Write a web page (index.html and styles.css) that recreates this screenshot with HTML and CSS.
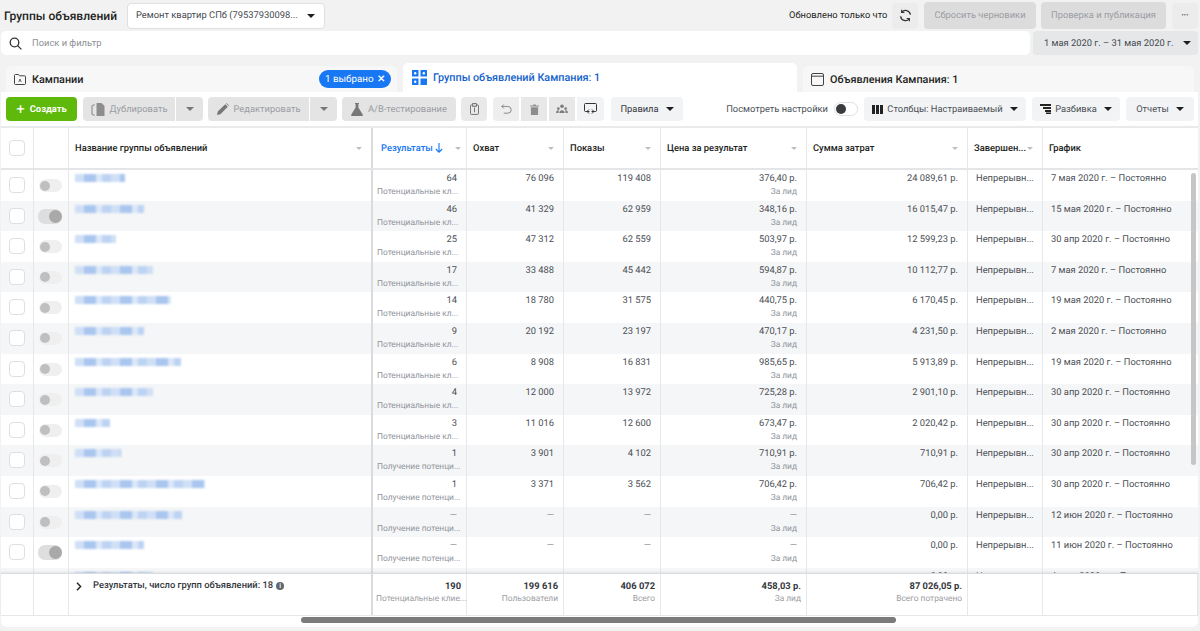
FILE: index.html
```html
<!DOCTYPE html>
<html lang="ru">
<head>
<meta charset="utf-8">
<title>Группы объявлений</title>
<link rel="stylesheet" href="styles.css">
</head>
<body>
<header class="top">
  <h1 class="title">Группы объявлений</h1>
  <div class="account"><span>Ремонт квартир СПб (79537930098...</span><i class="tri dark"></i></div>
  <div class="top-right">
    <span class="updated">Обновлено только что</span>
    <button class="btn square"><svg width="13" height="13" viewBox="0 0 14 14" fill="none" stroke="#333" stroke-width="1.4"><path d="M12.300 6A5.400 5.400 0 0 0 2.800 3.400M1.700 8a5.400 5.400 0 0 0 9.500 2.600"/><path d="M2.800.8v3h3M11.200 13.200v-3h-3" stroke-width="1.200"/></svg></button>
    <button class="btn dis wide1">Сбросить черновики</button>
    <button class="btn dis wide2">Проверка и публикация</button>
    <button class="btn square dots">•••</button>
  </div>
</header>

<div class="search-row">
  <div class="search">
    <svg width="13" height="13" viewBox="0 0 13 13" fill="none" stroke="#333" stroke-width="1.3"><circle cx="5.5" cy="5.5" r="4.3"/><path d="M8.6 8.6L12.4 12.4"/></svg>
    <span>Поиск и фильтр</span>
  </div>
  <button class="btn date"><span>1 мая 2020 г. – 31 мая 2020 г.</span><i class="tri dark"></i></button>
</div>

<nav class="tabs">
  <div class="tab">
    <svg width="12" height="12" viewBox="0 0 12 12" fill="none" stroke="#444"><path d="M.5 2.5a1 1 0 0 1 1-1h3l1 1.3h5a1 1 0 0 1 1 1v6.7a1 1 0 0 1-1 1h-9a1 1 0 0 1-1-1z"/><path d="M4.8 9l1.2-3 1.2 3" stroke-width=".8"/></svg>
    <b>Кампании</b>
    <span class="pill">1 выбрано <em>×</em></span>
  </div>
  <div class="tab active">
    <svg width="15" height="15" viewBox="0 0 15 15" fill="#1877f2"><path d="M0 0h6.5v6.5H0zM8.5 0H15v6.5H8.5zM0 8.5h6.5V15H0zM8.5 8.5H15V15H8.5z"/><circle cx="3.2" cy="3.2" r="1.2" fill="#fff"/><circle cx="11.8" cy="3.2" r="1.2" fill="#fff"/><circle cx="3.2" cy="11.8" r="1.2" fill="#fff"/></svg>
    <b>Группы объявлений Кампания: 1</b>
  </div>
  <div class="tab">
    <svg width="13" height="13" viewBox="0 0 13 13" fill="none" stroke="#444"><rect x=".5" y=".5" width="12" height="12" rx="1.5"/><path d="M.5 3.2h12"/></svg>
    <b>Объявления Кампания: 1</b>
  </div>
</nav>

<main class="panel">
  <div class="toolbar">
    <button class="btn create"><span class="plus">+</span>Создать</button>
    <button class="btn dis b-dup"><svg width="14" height="13" viewBox="0 0 14 13" fill="#8d8d8d"><path d="M5.5 0h5l3 3v10h-8z"/><path d="M3.5 1.5L1 3v8l2.5 1.5" fill="none" stroke="#8d8d8d" stroke-width="1.1"/></svg>Дублировать</button>
    <button class="btn dis b-dd"><i class="tri grey"></i></button>
    <button class="btn dis b-edit"><svg width="12" height="12" viewBox="0 0 12 12" fill="#777"><path d="M0 12l.8-3.4L8.2 1.2l2.6 2.6-7.4 7.4zM9 .4l.5-.4L12 2.5l-.4.5z"/></svg>Редактировать</button>
    <button class="btn dis b-dd2"><i class="tri grey"></i></button>
    <button class="btn dis b-ab"><svg width="12" height="13" viewBox="0 0 12 13" fill="#777"><path d="M4 0h4v1H7.400v3.600L12 12a1 1 0 0 1-.8 1H.8A1 1 0 0 1 0 12l4.600-7.400V1H4z"/></svg>A/B-тестирование</button>
    <button class="btn dis ico b-clip"><svg width="9" height="12" viewBox="0 0 10 13" fill="none" stroke="#666"><rect x=".5" y="2" width="9" height="10.500" rx="1"/><rect x="3" y=".5" width="4" height="3" fill="#e4e4e4"/><path d="M5 5v5"/></svg></button>
    <button class="btn dis ico b-undo"><svg width="11" height="10" viewBox="0 0 12 11" fill="none" stroke="#8a8a8a" stroke-width="1.100"><path d="M3 .5L.8 2.700 3 4.900M1 2.700h6.500a3.700 3.700 0 0 1 0 7.400H3"/></svg></button>
    <button class="btn dis ico b-mid"><svg width="9" height="11" viewBox="0 0 10 12" fill="#8d8d8d"><path d="M0 1.500h3.500V.5h3v1H10v1.200H0zM1 3.500h8V12H1z"/></svg></button>
    <button class="btn dis ico b-mid"><svg width="12" height="10" viewBox="0 0 13 11" fill="#7d7d7d"><circle cx="6.500" cy="2.500" r="2"/><circle cx="2.500" cy="5" r="1.500"/><circle cx="10.500" cy="5" r="1.500"/><path d="M3.500 10c0-4 6-4 6 0zM0 10c0-3 2-3.300 3-2.800L2.500 10zM13 10c0-3-2-3.300-3-2.800l.5 2.800z"/></svg></button>
    <button class="btn light ico b-share"><svg width="13" height="12" viewBox="0 0 13 12" fill="none" stroke="#333"><path d="M3 8.500H1.500a1 1 0 0 1-1-1v-6a1 1 0 0 1 1-1h10a1 1 0 0 1 1 1v6a1 1 0 0 1-1 1H10" fill="#f2f3f4"/><path d="M5 6.500l-2 2 2 2M8 6.500l2 2-2 2M3 8.500h2.500M7.500 8.500H10" stroke-width="1"/></svg></button>
    <button class="btn light b-rules">Правила<i class="tri dark"></i></button>
    <div class="tool-right">
      <span class="view">Посмотреть настройки</span>
      <span class="switch"><i></i></span>
      <button class="btn light b-cols"><svg width="11" height="9" viewBox="0 0 11 9" fill="#222"><path d="M0 0h3v9H0zM4 0h3v9H4zM8 0h3v9H8z"/></svg>Столбцы: Настраиваемый<i class="tri dark"></i></button>
      <button class="btn light b-brk"><svg width="11" height="10" viewBox="0 0 11 10" fill="#222"><path d="M0 0h11v2H0zM3 3h8v2H3zM5 6h6v2H5zM6 8.500h5V10H6z"/></svg>Разбивка<i class="tri dark"></i></button>
      <button class="btn light b-rep">Отчеты<i class="tri dark"></i></button>
    </div>
  </div>

  <div class="grid-row head">
    <div class="c chk"><span class="box big"></span></div>
    <div class="c"></div>
    <div class="c hc name-col">Название группы объявлений<i class="tri pale"></i></div>
    <div class="c hc res sorted">Результаты<svg class="arrow" width="8" height="10" viewBox="0 0 8 10" fill="none" stroke="#1877f2" stroke-width="1.100"><path d="M4 0v9M.8 6L4 9.200 7.200 6"/></svg><i class="tri pale"></i></div>
    <div class="c hc">Охват<i class="tri pale"></i></div>
    <div class="c hc">Показы<i class="tri pale"></i></div>
    <div class="c hc">Цена за результат<i class="tri pale"></i></div>
    <div class="c hc">Сумма затрат<i class="tri pale"></i></div>
    <div class="c hc">Завершен...<i class="tri pale"></i></div>
    <div class="c hc last">График</div>
  </div>

  <div class="body">
    <div class="scroll-v"></div>
    <div class="grid-row"><div class="c chk"><span class="box"></span></div><div class="c tg"><span class="t"></span></div><div class="c nm"><span class="blur" style="width:50px"></span></div><div class="c res n"><p>64</p><small>Потенциальные кл...</small></div><div class="c n"><p>76 096</p></div><div class="c n"><p>119 408</p></div><div class="c n"><p>376,40 р.</p><small>За лид</small></div><div class="c n"><p>24 089,61 р.</p></div><div class="c e"><p>Непрерывн...</p></div><div class="c s"><p>7 мая 2020 г. – Постоянно</p></div></div>
    <div class="grid-row alt"><div class="c chk"><span class="box"></span></div><div class="c tg"><span class="t on"></span></div><div class="c nm"><span class="blur" style="width:69px"></span></div><div class="c res n"><p>46</p><small>Потенциальные кл...</small></div><div class="c n"><p>41 329</p></div><div class="c n"><p>62 959</p></div><div class="c n"><p>348,16 р.</p><small>За лид</small></div><div class="c n"><p>16 015,47 р.</p></div><div class="c e"><p>Непрерывн...</p></div><div class="c s"><p>15 мая 2020 г. – Постоянно</p></div></div>
    <div class="grid-row"><div class="c chk"><span class="box"></span></div><div class="c tg"><span class="t"></span></div><div class="c nm"><span class="blur" style="width:41px"></span></div><div class="c res n"><p>25</p><small>Потенциальные кл...</small></div><div class="c n"><p>47 312</p></div><div class="c n"><p>62 559</p></div><div class="c n"><p>503,97 р.</p><small>За лид</small></div><div class="c n"><p>12 599,23 р.</p></div><div class="c e"><p>Непрерывн...</p></div><div class="c s"><p>30 апр 2020 г. – Постоянно</p></div></div>
    <div class="grid-row alt"><div class="c chk"><span class="box"></span></div><div class="c tg"><span class="t"></span></div><div class="c nm"><span class="blur" style="width:78px"></span></div><div class="c res n"><p>17</p><small>Потенциальные кл...</small></div><div class="c n"><p>33 488</p></div><div class="c n"><p>45 442</p></div><div class="c n"><p>594,87 р.</p><small>За лид</small></div><div class="c n"><p>10 112,77 р.</p></div><div class="c e"><p>Непрерывн...</p></div><div class="c s"><p>7 мая 2020 г. – Постоянно</p></div></div>
    <div class="grid-row"><div class="c chk"><span class="box"></span></div><div class="c tg"><span class="t"></span></div><div class="c nm"><span class="blur" style="width:96px"></span></div><div class="c res n"><p>14</p><small>Потенциальные кл...</small></div><div class="c n"><p>18 780</p></div><div class="c n"><p>31 575</p></div><div class="c n"><p>440,75 р.</p><small>За лид</small></div><div class="c n"><p>6 170,45 р.</p></div><div class="c e"><p>Непрерывн...</p></div><div class="c s"><p>19 мая 2020 г. – Постоянно</p></div></div>
    <div class="grid-row alt"><div class="c chk"><span class="box"></span></div><div class="c tg"><span class="t"></span></div><div class="c nm"><span class="blur" style="width:69px"></span></div><div class="c res n"><p>9</p><small>Потенциальные кл...</small></div><div class="c n"><p>20 192</p></div><div class="c n"><p>23 197</p></div><div class="c n"><p>470,17 р.</p><small>За лид</small></div><div class="c n"><p>4 231,50 р.</p></div><div class="c e"><p>Непрерывн...</p></div><div class="c s"><p>2 мая 2020 г. – Постоянно</p></div></div>
    <div class="grid-row"><div class="c chk"><span class="box"></span></div><div class="c tg"><span class="t"></span></div><div class="c nm"><span class="blur" style="width:106px"></span></div><div class="c res n"><p>6</p><small>Потенциальные кл...</small></div><div class="c n"><p>8 908</p></div><div class="c n"><p>16 831</p></div><div class="c n"><p>985,65 р.</p><small>За лид</small></div><div class="c n"><p>5 913,89 р.</p></div><div class="c e"><p>Непрерывн...</p></div><div class="c s"><p>19 мая 2020 г. – Постоянно</p></div></div>
    <div class="grid-row alt"><div class="c chk"><span class="box"></span></div><div class="c tg"><span class="t"></span></div><div class="c nm"><span class="blur" style="width:78px"></span></div><div class="c res n"><p>4</p><small>Потенциальные кл...</small></div><div class="c n"><p>12 000</p></div><div class="c n"><p>13 972</p></div><div class="c n"><p>725,28 р.</p><small>За лид</small></div><div class="c n"><p>2 901,10 р.</p></div><div class="c e"><p>Непрерывн...</p></div><div class="c s"><p>30 апр 2020 г. – Постоянно</p></div></div>
    <div class="grid-row"><div class="c chk"><span class="box"></span></div><div class="c tg"><span class="t"></span></div><div class="c nm"><span class="blur" style="width:35px"></span></div><div class="c res n"><p>3</p><small>Потенциальные кл...</small></div><div class="c n"><p>11 016</p></div><div class="c n"><p>12 600</p></div><div class="c n"><p>673,47 р.</p><small>За лид</small></div><div class="c n"><p>2 020,42 р.</p></div><div class="c e"><p>Непрерывн...</p></div><div class="c s"><p>30 апр 2020 г. – Постоянно</p></div></div>
    <div class="grid-row alt"><div class="c chk"><span class="box"></span></div><div class="c tg"><span class="t"></span></div><div class="c nm"><span class="blur" style="width:46px"></span></div><div class="c res n"><p>1</p><small>Получение потенци...</small></div><div class="c n"><p>3 901</p></div><div class="c n"><p>4 102</p></div><div class="c n"><p>710,91 р.</p><small>За лид</small></div><div class="c n"><p>710,91 р.</p></div><div class="c e"><p>Непрерывн...</p></div><div class="c s"><p>30 апр 2020 г. – Постоянно</p></div></div>
    <div class="grid-row"><div class="c chk"><span class="box"></span></div><div class="c tg"><span class="t"></span></div><div class="c nm"><span class="blur" style="width:130px"></span></div><div class="c res n"><p>1</p><small>Получение потенци...</small></div><div class="c n"><p>3 371</p></div><div class="c n"><p>3 562</p></div><div class="c n"><p>706,42 р.</p><small>За лид</small></div><div class="c n"><p>706,42 р.</p></div><div class="c e"><p>Непрерывн...</p></div><div class="c s"><p>30 апр 2020 г. – Постоянно</p></div></div>
    <div class="grid-row alt"><div class="c chk"><span class="box"></span></div><div class="c tg"><span class="t"></span></div><div class="c nm"><span class="blur" style="width:107px"></span></div><div class="c res n"><p class="dash">—</p><small>Получение потенци...</small></div><div class="c n"><p class="dash">—</p></div><div class="c n"><p class="dash">—</p></div><div class="c n"><p class="dash">—</p><small>За лид</small></div><div class="c n"><p>0,00 р.</p></div><div class="c e"><p>Непрерывн...</p></div><div class="c s"><p>12 июн 2020 г. – Постоянно</p></div></div>
    <div class="grid-row"><div class="c chk"><span class="box"></span></div><div class="c tg"><span class="t on"></span></div><div class="c nm"><span class="blur" style="width:69px"></span></div><div class="c res n"><p class="dash">—</p><small>Получение потенци...</small></div><div class="c n"><p class="dash">—</p></div><div class="c n"><p class="dash">—</p></div><div class="c n"><p class="dash">—</p><small>За лид</small></div><div class="c n"><p>0,00 р.</p></div><div class="c e"><p>Непрерывн...</p></div><div class="c s"><p>11 июн 2020 г. – Постоянно</p></div></div>
    <div class="grid-row alt"><div class="c chk"><span class="box"></span></div><div class="c tg"><span class="t"></span></div><div class="c nm"><span class="blur" style="width:78px"></span></div><div class="c res n"></div><div class="c n"></div><div class="c n"></div><div class="c n"></div><div class="c n"><p>0,00 р.</p></div><div class="c e"><p>Непрерывн...</p></div><div class="c s"><p>4 июн 2020 г. – Постоянно</p></div></div>
  </div>

  <div class="grid-row foot">
    <div class="c"></div>
    <div class="c"></div>
    <div class="c total"><svg width="6" height="9" viewBox="0 0 6 9" fill="none" stroke="#222" stroke-width="1.400"><path d="M1 .8l3.600 3.700L1 8.200"/></svg><span>Результаты, число групп объявлений: 18</span><i class="info">i</i></div>
    <div class="c res f"><p>190</p><small>Потенциальные клие...</small></div>
    <div class="c f"><p>199 616</p><small>Пользователи</small></div>
    <div class="c f"><p>406 072</p><small>Всего</small></div>
    <div class="c f"><p>458,03 р.</p><small>За лид</small></div>
    <div class="c f"><p>87 026,05 р.</p><small>Всего потрачено</small></div>
    <div class="c"></div>
    <div class="c"></div>
  </div>
  <div class="hbar"><span></span></div>
</main>
</body>
</html>
```
FILE: styles.css
```css
* { box-sizing: border-box; }
html, body { margin: 0; height: 631px; overflow: hidden; }
body { background: #f2f2f3; font-family: Roboto, "Liberation Sans", sans-serif; font-size: 9.350px; color: #4b4f56; text-rendering: geometricPrecision; }
p { margin: 0; }
button { font: inherit; border: 0; margin: 0; padding: 0; text-rendering: inherit; }

.tri { display: inline-block; width: 0; height: 0; border-left: 4px solid transparent; border-right: 4px solid transparent; border-top: 4.5px solid #1c1e21; flex: none; }
.tri.grey { border-top-color: #777; }
.tri.pale { border-left-width: 3.5px; border-right-width: 3.5px; border-top: 3.5px solid #bcc0c4; }

.btn { display: flex; align-items: center; justify-content: center; height: 24px; border-radius: 4px; color: #4b4f56; white-space: nowrap; flex: none; }
.btn.dis { background: #e4e4e5; color: #9a9da2; }
.btn.light { background: #f2f3f4; }
.btn.ico { width: 26px; }

.top { display: flex; align-items: center; height: 29px; padding: 2px 2px 0 4px; }
.title { margin: 0; font-size: 12px; font-weight: 500; color: #1c1e21; width: 123px; white-space: nowrap; }
.account { width: 198px; height: 26px; display: flex; align-items: center; justify-content: space-between; padding: 0 9px 0 8px; background: #fff; border: 1px solid #dddfe2; border-radius: 4px; color: #444950; white-space: nowrap; }
.top-right { margin-left: auto; display: flex; align-items: center; }
.updated { color: #1c1e21; margin-right: 5px; width: 98px; white-space: nowrap; }
.btn.square { width: 26px; height: 26px; background: #ececed; margin-right: 6px; }
.btn.wide1 { width: 112px; height: 27px; margin-right: 5px; background: #dcdcdd; }
.btn.wide2 { width: 125px; height: 27px; margin-right: 6px; background: #dcdcdd; }
.btn.dots { margin: 0; font-size: 6px; color: #333; letter-spacing: .3px; }

.search-row { display: flex; margin: 2px 2px 0 1px; gap: 3px; height: 24px; }
.search { flex: 1; display: flex; align-items: center; gap: 10px; padding-left: 8px; background: #fff; border-radius: 5px; color: #8d9095; }
.btn.date { width: 165px; background: #e6e7e8; justify-content: space-between; padding: 0 7px 0 11px; color: #444950; }

.tabs { display: flex; margin: 8px 6px 0 6px; gap: 6px; height: 29px; align-items: flex-end; }
.tab { flex: 1; height: 26px; display: flex; align-items: center; gap: 6px; padding: 0 6px 0 8px; background: #f7f7f8; border-radius: 5px 5px 0 0; color: #1c1e21; font-size: 10.800px; white-space: nowrap; }
.tab b { font-weight: 500; }
.tab.active { height: 29px; background: #fff; padding: 0 8px 0 9px; color: #1463c9; gap: 6px; }
.pill { margin-left: auto; background: #1877f2; color: #fff; height: 18px; border-radius: 9px; display: flex; align-items: center; padding: 0 6px; font-size: 9.800px; gap: 4px; }
.pill em { font-style: normal; font-size: 14px; line-height: 1; }

.panel { margin: 0 2px 0 1px; height: 535px; background: #fff; border-radius: 0 0 6px 6px; position: relative; display: flex; flex-direction: column; }
.toolbar { display: flex; align-items: center; height: 36px; padding: 0 4px 0 5px; border-bottom: 2px solid #e9eaec; }
.btn.create { width: 71px; background: #5fb90b; color: #fff; font-weight: 700; margin-right: 6px; gap: 5px; }
.plus { font-size: 15px; font-weight: 400; line-height: 1; }
.b-dup { width: 92px; gap: 5px; border-radius: 4px 0 0 4px; margin-right: 1px; }
.b-dd { width: 27px; border-radius: 0 4px 4px 0; margin-right: 5px; }
.b-edit { width: 101px; gap: 5px; border-radius: 4px 0 0 4px; margin-right: 1px; }
.b-dd2 { width: 27px; border-radius: 0 4px 4px 0; margin-right: 5px; }
.b-ab { width: 114px; gap: 5px; margin-right: 5px; }
.toolbar .ico { margin-right: 2px; }
.toolbar .b-clip { margin-right: 6px; background: #e9e9ea; }
.toolbar .b-undo { background: #eeeeef; border-radius: 4px 0 0 4px; }
.toolbar .b-mid { border-radius: 0; background: #e8e8e9; }
.toolbar .b-share { margin-right: 7px; width: 27px; border-radius: 0 4px 4px 0; }
.b-rules { width: 72px; gap: 7px; color: #33373d; }
.tool-right { margin-left: auto; display: flex; align-items: center; }
.view { margin-right: 6px; color: #4b4f56; }
.switch { width: 24px; height: 14px; border: 1px solid #dddfe2; border-radius: 7px; margin-right: 6px; padding: 1px; display: flex; }
.switch i { width: 10px; height: 10px; border-radius: 50%; background: #3a3b3c; }
.b-cols { width: 162px; gap: 4px; margin-right: 6px; }
.b-cols .tri, .b-brk .tri { margin-left: 3px; }
.b-brk { width: 88px; gap: 4px; margin-right: 6px; }
.b-rep { width: 68px; gap: 7px; }

.grid-row { display: grid; grid-template-columns: 33px 35px 304px 94px 97px 97px 146px 161px 75px 155px; }
.c { border-right: 1px solid #e6e7e9; min-width: 0; overflow: hidden; }
.c.nm, .name-col, .total { border-right: 2px solid #d9dbde; }
.head { height: 42px; border-bottom: 2px solid #e4e5e7; }
.head .c { border-right-width: 1px; }
.head .name-col { border-right-width: 2px; }
.hc { display: flex; align-items: center; justify-content: space-between; padding: 0 9px 0 6px; font-weight: 500; color: #1c1e21; white-space: nowrap; }
.hc.sorted { color: #1877f2; padding-left: 8px; padding-right: 5px; }
.arrow { margin: 0 auto 0 2px; }
.last { border-right: 0; }
.chk { display: flex; justify-content: center; padding-right: 1px; }
.head .chk { align-items: center; }
.box { width: 16px; height: 16px; background: #fff; border: 1px solid #dddfe2; border-radius: 4px; display: block; margin-top: 7px; }
.box.big { margin: 0; }

.body { height: 403px; overflow: hidden; position: relative; }
.body .grid-row { height: 30.6px; }
.alt { background: #f5f6f7; }
.tg { display: flex; justify-content: center; padding: 9px 2px 0 0; }
.t { width: 23px; height: 13px; border-radius: 7px; background: #efefef; position: relative; display: block; }
.t::after { content: ""; position: absolute; left: 1px; top: 1.500px; width: 10px; height: 10px; border-radius: 50%; background: #bfbfbf; }
.t.on { width: 24px; height: 15px; background: #dedede; margin-top: -1px; }
.t.on::after { left: auto; right: 0; top: 1px; width: 13px; height: 13px; background: #a9a9a9; }
.nm { padding: 4px 0 0 6px; }
.blur { display: block; height: 8px; background: repeating-linear-gradient(90deg, #cfdff6 0 9px, #a9c6ef 9px 21px, #dbe7f8 21px 27px, #bdd3f3 27px 36px); filter: blur(1px); }
.n { text-align: right; padding: 3px 9px 0 4px; color: #4b4f56; line-height: 12px; }
.n p { height: 12px; }
.dash { color: #8d9095; }
small { display: block; font-size: 8.400px; color: #90949c; line-height: 11px; margin-top: 2px; white-space: nowrap; }
.e { padding: 3px 8px 0 8px; line-height: 12px; white-space: nowrap; }
.s { padding: 3px 0 0 8px; line-height: 12px; white-space: nowrap; border-right: 0; }

.scroll-v { position: absolute; z-index: 2; right: 2px; top: 3px; width: 5px; height: 292px; border-radius: 3px; background: #c6c6c6; }

.foot { height: 43px; border-top: 1px solid #dadcdf; box-shadow: 0 -1px 2px rgba(0,0,0,.08); background: #fff; position: relative; z-index: 3; border-bottom: 1px solid #e6e7e9; }
.total { display: flex; align-items: flex-start; padding: 6px 0 0 7px; font-weight: 500; color: #33373d; white-space: nowrap; line-height: 12px; }
.total svg { margin: 2px 11px 0 0; }
.info { width: 8px; height: 8px; margin: 2px 0 0 3px; border-radius: 50%; background: #606770; color: #fff; font-size: 7px; line-height: 8px; text-align: center; font-style: normal; }
.f { text-align: right; padding: 7px 5px 0 3px; line-height: 12px; }
.f p { font-weight: 700; color: #33373d; }
.f small { font-size: 8.400px; margin-top: 1px; color: #9a9da2; }

.hbar { height: 11px; padding: 1px 0 0 300px; }
.hbar span { display: block; width: 595px; height: 6px; border-radius: 3px; background: #7b7b7b; }
```
